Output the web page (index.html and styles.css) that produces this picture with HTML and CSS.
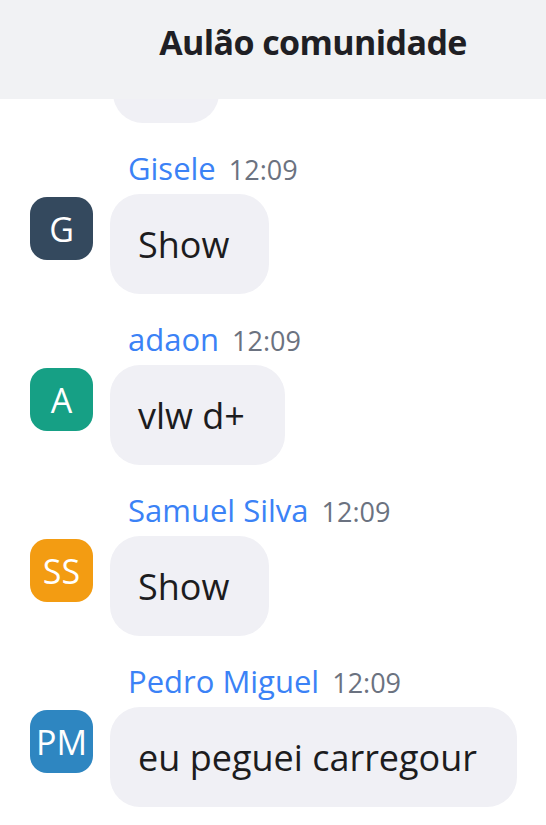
FILE: index.html
```html
<!DOCTYPE html>
<html lang="pt-BR">
<head>
    <meta charset="UTF-8">
    <meta name="viewport" content="width=device-width,initial-scale=1">
    <title>Aulão comunidade</title>
    <link rel="stylesheet" href="styles.css">
</head>
<body>
    <header class="chat-header">
        <h1>Aulão comunidade</h1>
    </header>
    <div class="chat">
        <div class="chat-scroll">
            <div class="msg-group msg-prev">
                <div class="bubble bubble-prev"></div>
            </div>

            <div class="msg-group">
                <div class="msg-meta"><span class="msg-name">Gisele</span><span class="msg-time">12:09</span></div>
                <div class="msg-row">
                    <div class="avatar av-navy">G</div>
                    <div class="bubble">Show</div>
                </div>
            </div>

            <div class="msg-group">
                <div class="msg-meta"><span class="msg-name">adaon</span><span class="msg-time">12:09</span></div>
                <div class="msg-row">
                    <div class="avatar av-green">A</div>
                    <div class="bubble">vlw d+</div>
                </div>
            </div>

            <div class="msg-group">
                <div class="msg-meta"><span class="msg-name">Samuel Silva</span><span class="msg-time">12:09</span></div>
                <div class="msg-row">
                    <div class="avatar av-orange">SS</div>
                    <div class="bubble">Show</div>
                </div>
            </div>

            <div class="msg-group">
                <div class="msg-meta"><span class="msg-name">Pedro Miguel</span><span class="msg-time">12:09</span></div>
                <div class="msg-row">
                    <div class="avatar av-blue">PM</div>
                    <div class="bubble">eu peguei carregour</div>
                </div>
            </div>
        </div>
    </div>
</body>
</html>
```

FILE: styles.css
```css
body {
    font-family: "Open Sans", "Noto Sans", sans-serif;
    background-color: #fff;
    color: #1c1c1e;
    margin: 0;
    padding: 0;
}
.chat-header {
    background: #f1f2f4;
    height: 99px;
    display: flex;
    justify-content: center;
    padding-left: 80px;
    box-sizing: border-box;
}
.chat-header h1 {
    margin: 0;
    padding-top: 17px;
    font-size: 34px;
    line-height: 50px;
    letter-spacing: -0.6px;
    font-weight: 700;
    color: #1f1f24;
}
.chat {
    height: 726px;
    overflow: hidden;
}
.chat-scroll {
    margin-top: -76px;
}
.msg-group {
    padding-left: 30px;
    margin-bottom: 27px;
}
.msg-meta {
    margin-left: 98px;
    height: 36px;
    line-height: 36px;
    margin-bottom: 8px;
    white-space: nowrap;
}
.msg-name {
    color: #3b82f6;
    font-size: 31px;
    margin-right: 13px;
}
.msg-time {
    color: #6b7280;
    font-size: 27px;
}
.msg-row {
    display: flex;
    align-items: flex-start;
    gap: 17px;
}
.avatar {
    width: 63px;
    height: 63px;
    margin-top: 3px;
    border-radius: 17px;
    color: #fff;
    font-size: 34px;
    display: flex;
    align-items: center;
    justify-content: center;
    flex-shrink: 0;
}
.av-navy { background: #34495e; }
.av-green { background: #16a085; }
.av-orange { background: #f39c12; }
.av-blue { background: #2e86c1; }
.bubble {
    background: #f0f0f5;
    border-radius: 30px;
    height: 100px;
    box-sizing: border-box;
    padding: 0 40px 0 28px;
    display: flex;
    align-items: center;
    font-size: 36px;
    white-space: nowrap;
}
.bubble-prev {
    margin-left: 83px;
    width: 106px;
}
```
